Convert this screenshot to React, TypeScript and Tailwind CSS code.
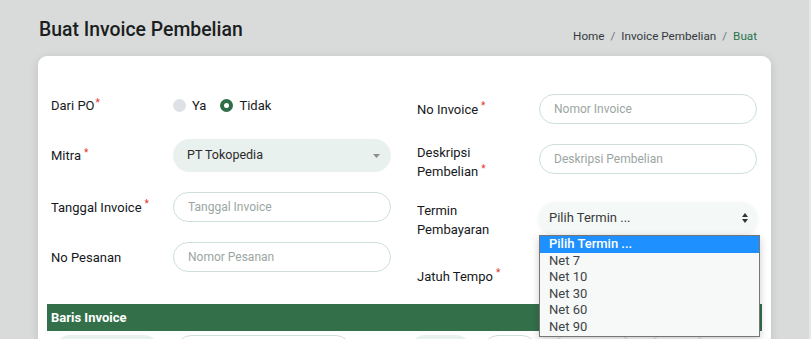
import { useState } from 'react';

const terms = ['Pilih Termin ...', 'Net 7', 'Net 10', 'Net 30', 'Net 60', 'Net 90'];

function Req({ space = true }: { space?: boolean }) {
    return <sup className={`text-[10px] text-[#e3342f] ${space ? 'ml-[3px]' : 'ml-[1px]'} -top-[0.45em]`}>*</sup>;
}

function Label({ children }: { children: React.ReactNode }) {
    return <div className="w-[122px] shrink-0 text-[13px] leading-[19px] text-[#16191c]">{children}</div>;
}

function TextInput({ placeholder }: { placeholder: string }) {
    return (
        <input
            className="h-[30px] min-w-0 flex-1 rounded-full border border-[#cddfd8] bg-white px-[14px] text-[12px] text-[#333] outline-none placeholder:text-[#9ba6a2]"
            placeholder={placeholder}
        />
    );
}

function Radio({ checked, label }: { checked?: boolean; label: string }) {
    return (
        <label className="flex items-center gap-[6px] text-[13px] text-[#16191c]">
            {checked ? (
                <span className="flex h-[13px] w-[13px] items-center justify-center rounded-full bg-[#2f6d48]">
                    <span className="h-[5px] w-[5px] rounded-full bg-white" />
                </span>
            ) : (
                <span className="h-[13px] w-[13px] rounded-full bg-[#dee2e6]" />
            )}
            {label}
        </label>
    );
}

export default function App() {
    const [fromPo, setFromPo] = useState(false);
    const [open] = useState(true);

    return (
        <div className="flex h-[339px] w-full overflow-hidden bg-[#d9dbda] font-['Roboto','Liberation_Sans',sans-serif]">
            <div className="flex-1 px-[38px]">
                {/* Header */}
                <div className="flex h-[56px] items-start justify-between">
                    <h1 className="pl-[1px] pt-[16px] text-[19.4px] font-medium leading-[28px] text-[#1b1e21]">Buat Invoice Pembelian</h1>
                    <div className="flex gap-[6px] pr-[14px] pt-[28px] text-[11.7px] text-[#343a40]">
                        <span>Home</span>
                        <span className="text-[#6c757d]">/</span>
                        <span>Invoice Pembelian</span>
                        <span className="text-[#6c757d]">/</span>
                        <span className="text-[#25744b]">Buat</span>
                    </div>
                </div>

                {/* Card */}
                <div className="h-[320px] rounded-[9px] bg-white pl-[13px] pr-[14px] pt-[33px] shadow-[0_2px_10px_rgba(0,0,0,0.12)]">
                    <div className="grid grid-cols-2 gap-x-[26px]">
                        {/* Left column */}
                        <div className="flex flex-col gap-[20px]">
                            <div className="flex h-[30px] items-center pt-[3px]">
                                <Label>Dari PO<Req space={false} /></Label>
                                <div className="flex gap-[14px]" onClick={() => setFromPo(!fromPo)}>
                                    <Radio label="Ya" checked={fromPo} />
                                    <Radio label="Tidak" checked={!fromPo} />
                                </div>
                            </div>
                            <div className="flex h-[33px] items-center">
                                <Label>Mitra<Req /></Label>
                                <div className="flex h-[33px] flex-1 items-center justify-between rounded-full bg-[#e9f1ee] pl-[14px] pr-[11px] text-[12.5px] text-[#2b2b2b]">
                                    <span>PT Tokopedia</span>
                                    <svg width="7" height="4" viewBox="0 0 7 4"><path d="M0 0h7L3.5 4z" fill="#8a8f8d" /></svg>
                                </div>
                            </div>
                            <div className="flex items-center">
                                <Label>Tanggal Invoice<Req /></Label>
                                <TextInput placeholder="Tanggal Invoice" />
                            </div>
                            <div className="flex items-center">
                                <Label>No Pesanan</Label>
                                <TextInput placeholder="Nomor Pesanan" />
                            </div>
                        </div>

                        {/* Right column */}
                        <div className="flex flex-col pt-[5px]">
                            <div className="flex items-center">
                                <Label>No Invoice<Req /></Label>
                                <TextInput placeholder="Nomor Invoice" />
                            </div>
                            <div className="mt-[20px] flex items-start">
                                <div className="-mt-[1px]">
                                    <Label>Deskripsi<br />Pembelian<Req /></Label>
                                </div>
                                <TextInput placeholder="Deskripsi Pembelian" />
                            </div>
                            <div className="mt-[21px] flex items-start">
                                <div className="-mt-[1px]">
                                    <Label>Termin<br />Pembayaran</Label>
                                </div>
                                <div className="relative flex-1">
                                    <div className="flex h-[32px] items-center justify-between rounded-full bg-[#f4f8f7] pl-[10px] pr-[9px] text-[13px] text-[#3a3a3a] shadow-[0_2px_5px_rgba(0,0,0,0.06)]">
                                        <span>Pilih Termin ...</span>
                                        <svg width="6" height="10" viewBox="0 0 6 10"><path d="M0 4L3 0l3 4zM0 6l3 4 3-4z" fill="#333" /></svg>
                                    </div>
                                    {open && (
                                        <ul className="absolute left-0 top-[33px] z-10 w-[221px] border border-[#767676] bg-[#f6f9f8] text-[13px] leading-[16.6px] text-[#3d4346] shadow-[0_3px_8px_rgba(0,0,0,0.2)]">
                                            {terms.map((t, i) => (
                                                <li
                                                    key={t}
                                                    className={i === 0 ? 'bg-[#1e90ff] px-[9px] font-medium text-white' : 'px-[9px]'}
                                                >
                                                    {t}
                                                </li>
                                            ))}
                                        </ul>
                                    )}
                                </div>
                            </div>
                            <div className="mt-[22px] flex h-[30px] items-center">
                                <Label>Jatuh Tempo<Req /></Label>
                            </div>
                        </div>
                    </div>

                    {/* Baris Invoice */}
                    <div className="-ml-[4px] -mr-[5px] mt-[13px] flex h-[27px] items-center bg-[#33704a] px-[4px] text-[13px] font-bold text-white">
                        Baris Invoice
                    </div>
                    <div className="mt-[4px] flex">
                        <div className="ml-[4px] h-[30px] w-[104px] rounded-full bg-[#e9f1ee]" />
                        <div className="ml-[17px] h-[30px] w-[175px] rounded-full border border-[#cddfd8]" />
                        <div className="ml-[59px] h-[30px] w-[61px] rounded-full bg-[#e9f1ee]" />
                        <div className="ml-[12px] h-[30px] w-[54px] rounded-full border border-[#cddfd8]" />
                        <div className="ml-[15px] h-[30px] w-[81px] rounded-full border border-[#cddfd8]" />
                        <div className="ml-[15px] h-[30px] w-[59px] rounded-full border border-[#cddfd8]" />
                    </div>
                </div>
            </div>
            <div className="w-[2px] bg-[#e6e7e7]" />
        </div>
    );
}
